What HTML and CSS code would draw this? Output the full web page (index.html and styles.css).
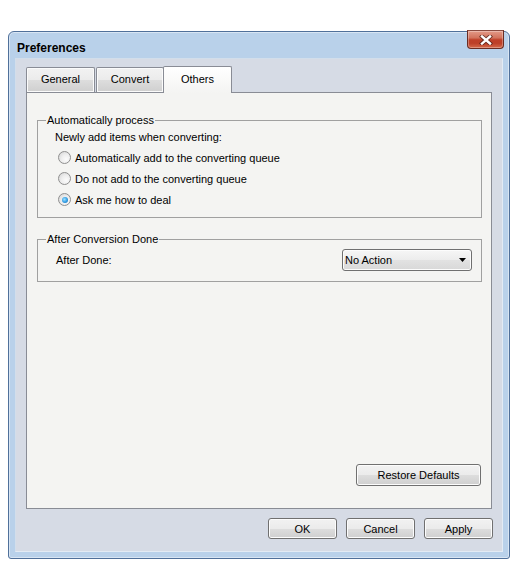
FILE: index.html
```html
<!DOCTYPE html>
<html>
<head>
<meta charset="utf-8">
<title>Preferences</title>
<link rel="stylesheet" href="styles.css">
</head>
<body>
<div class="window">
  <div class="titlebar">
    <span class="title">Preferences</span>
    <div class="close">
      <svg width="14" height="10" viewBox="0 0 14 10">
        <path d="M3 1.5 L11 8.5 M11 1.5 L3 8.5" stroke="#4a1e16" stroke-width="4.2" stroke-linecap="square" fill="none" opacity="0.75"/>
        <path d="M3 1.5 L11 8.5 M11 1.5 L3 8.5" stroke="#ffffff" stroke-width="2.4" stroke-linecap="square" fill="none"/>
      </svg>
    </div>
  </div>
  <div class="frame">
    <div class="tabs">
      <div class="tab tab-general">General</div>
      <div class="tab tab-convert">Convert</div>
      <div class="tab tab-others active">Others</div>
    </div>
    <div class="panel">
      <fieldset class="group group-auto">
        <legend>Automatically process</legend>
        <div class="group-body">
          <div class="row label-row">Newly add items when converting:</div>
          <div class="row radio-row"><span class="radio"></span><span>Automatically add to the converting queue</span></div>
          <div class="row radio-row"><span class="radio"></span><span>Do not add to the converting queue</span></div>
          <div class="row radio-row"><span class="radio checked"></span><span>Ask me how to deal</span></div>
        </div>
      </fieldset>
      <fieldset class="group group-after">
        <legend>After Conversion Done</legend>
        <div class="group-body after-body">
          <span class="after-label">After Done:</span>
          <div class="select">
            <span>No Action</span>
            <svg class="arrow" width="7" height="4" viewBox="0 0 7 4"><path d="M0 0 H7 L3.5 4 Z" fill="#000"/></svg>
          </div>
        </div>
      </fieldset>
      <div class="panel-actions">
        <button class="btn btn-restore">Restore Defaults</button>
      </div>
    </div>
    <div class="footer">
      <button class="btn btn-dlg">OK</button>
      <button class="btn btn-dlg">Cancel</button>
      <button class="btn btn-dlg">Apply</button>
    </div>
  </div>
</div>
</body>
</html>
```
FILE: styles.css
```css
html, body {
  margin: 0;
  padding: 0;
  background: #ffffff;
}
body {
  font-family: "Liberation Sans", Arial, sans-serif;
  font-size: 11px;
  color: #000;
}
.window {
  position: relative;
  box-sizing: border-box;
  width: 502px;
  height: 528px;
  margin: 31px 0 0 8px;
  border: 1px solid #50709a;
  border-radius: 6px 6px 3px 3px;
  background: #b9d1ea;
  box-shadow: inset 0 0 0 1px #d8e5f3;
  padding: 0 6px 6px 6px;
  display: flex;
  flex-direction: column;
}
.titlebar {
  height: 26px;
  box-sizing: border-box;
  padding: 9px 0 0 2px;
}
.title {
  font-size: 12px;
  font-weight: bold;
  line-height: 14px;
  color: #000;
}
.close {
  position: absolute;
  top: -2px;
  right: 5px;
  width: 37px;
  height: 19px;
  box-sizing: border-box;
  border: 1px solid #6b2c22;
  border-top-color: #8a4a3f;
  border-radius: 0 0 4px 4px;
  background: linear-gradient(#e39a88 0%, #d2735d 40%, #bf3f28 52%, #bd3f27 72%, #d5694a 100%);
  box-shadow: inset 0 0 0 1px rgba(255,255,255,0.3);
  display: flex;
  align-items: center;
  justify-content: center;
}
.frame {
  flex: 1;
  box-sizing: border-box;
  border: 1px solid #d2deeb;
  border-right-color: #e3ebf4;
  border-bottom-color: #e3ebf4;
  background: #d6dbe5;
  padding: 7px 10px 0 10px;
  display: flex;
  flex-direction: column;
}
.tabs {
  height: 27px;
  display: flex;
  align-items: flex-end;
  position: relative;
  z-index: 2;
  margin-bottom: -1px;
}
.tab {
  box-sizing: border-box;
  height: 25px;
  margin-bottom: 1px;
  border: 1px solid #898c95;
  border-bottom: none;
  border-radius: 2px 2px 0 0;
  background: linear-gradient(#f2f2f2 0%, #ebebeb 50%, #dddddd 51%, #cfcfcf 100%);
  box-shadow: inset 0 0 0 1px #fbfbfb;
  display: flex;
  align-items: center;
  justify-content: center;
  padding-bottom: 3px;
}
.tab-general { width: 69px; margin-right: 1px; }
.tab-convert { width: 68px; }
.tab-others {
  width: 69px;
  margin-left: -1px;
}
.tab.active {
  height: 27px;
  margin-bottom: 0;
  background: linear-gradient(#ffffff, #f4f4f2);
  box-shadow: none;
  padding-bottom: 2px;
}
.panel {
  box-sizing: border-box;
  width: 466px;
  height: 417px;
  border: 1px solid #898c95;
  background: #f4f4f2;
  padding: 0 10px 22px 10px;
  display: flex;
  flex-direction: column;
  position: relative;
  z-index: 1;
}
.group {
  margin: 0 -1px 0 0;
  padding: 0;
  border: 1px solid #a0a0a0;
  min-width: 0;
}
.group legend {
  padding: 0 1px;
  margin-left: 8px;
  line-height: 13px;
  height: 13px;
}
.group-auto {
  margin-top: 21px;
}
.group-auto .group-body {
  margin-top: -1px;
  padding: 0 0 7px 17px;
}
.row {
  height: 21px;
  display: flex;
  align-items: center;
}
.radio-row {
  padding-left: 3px;
}
.radio {
  box-sizing: border-box;
  width: 13px;
  height: 13px;
  border-radius: 50%;
  border: 1px solid #8f8f8f;
  background: radial-gradient(circle at 65% 65%, #fbfbfb 0%, #eeeeee 45%, #d2d2d2 100%);
  margin-right: 4px;
  position: relative;
  flex: none;
}
.radio.checked::after {
  content: "";
  position: absolute;
  left: 2.5px;
  top: 2.5px;
  width: 6px;
  height: 6px;
  border-radius: 50%;
  background: radial-gradient(circle at 40% 40%, #9ee0ff 0%, #3aa3e6 50%, #0f64b2 100%);
}
.group-after {
  margin-top: 15px;
}
.after-body {
  display: flex;
  align-items: center;
  justify-content: space-between;
  padding: 3px 9px 10px 18px;
}
.select {
  box-sizing: border-box;
  width: 130px;
  height: 22px;
  border: 1px solid #707070;
  border-radius: 3px;
  background: linear-gradient(#f6f6f6 0%, #ececec 50%, #e2e2e2 51%, #d8d8d8 100%);
  box-shadow: inset 0 0 0 1px #fcfcfc;
  display: flex;
  align-items: center;
  justify-content: space-between;
  padding: 0 5px 0 2px;
}
.arrow {
  display: block;
}
.panel-actions {
  margin-top: auto;
  display: flex;
  justify-content: flex-end;
}
.btn {
  box-sizing: border-box;
  font-family: "Liberation Sans", Arial, sans-serif;
  font-size: 11px;
  color: #000;
  border: 1px solid #707070;
  border-radius: 3px;
  background: linear-gradient(#f2f2f2 0%, #ebebeb 50%, #dddddd 51%, #cfcfcf 100%);
  box-shadow: inset 0 0 0 1px #fcfcfc;
  padding: 0;
  margin: 0;
}
.btn-restore {
  width: 125px;
  height: 22px;
}
.footer {
  display: flex;
  justify-content: flex-end;
  gap: 9px;
  padding: 9px 0 0 0;
  margin-right: -1px;
}
.btn-dlg {
  width: 69px;
  height: 21px;
}
```
